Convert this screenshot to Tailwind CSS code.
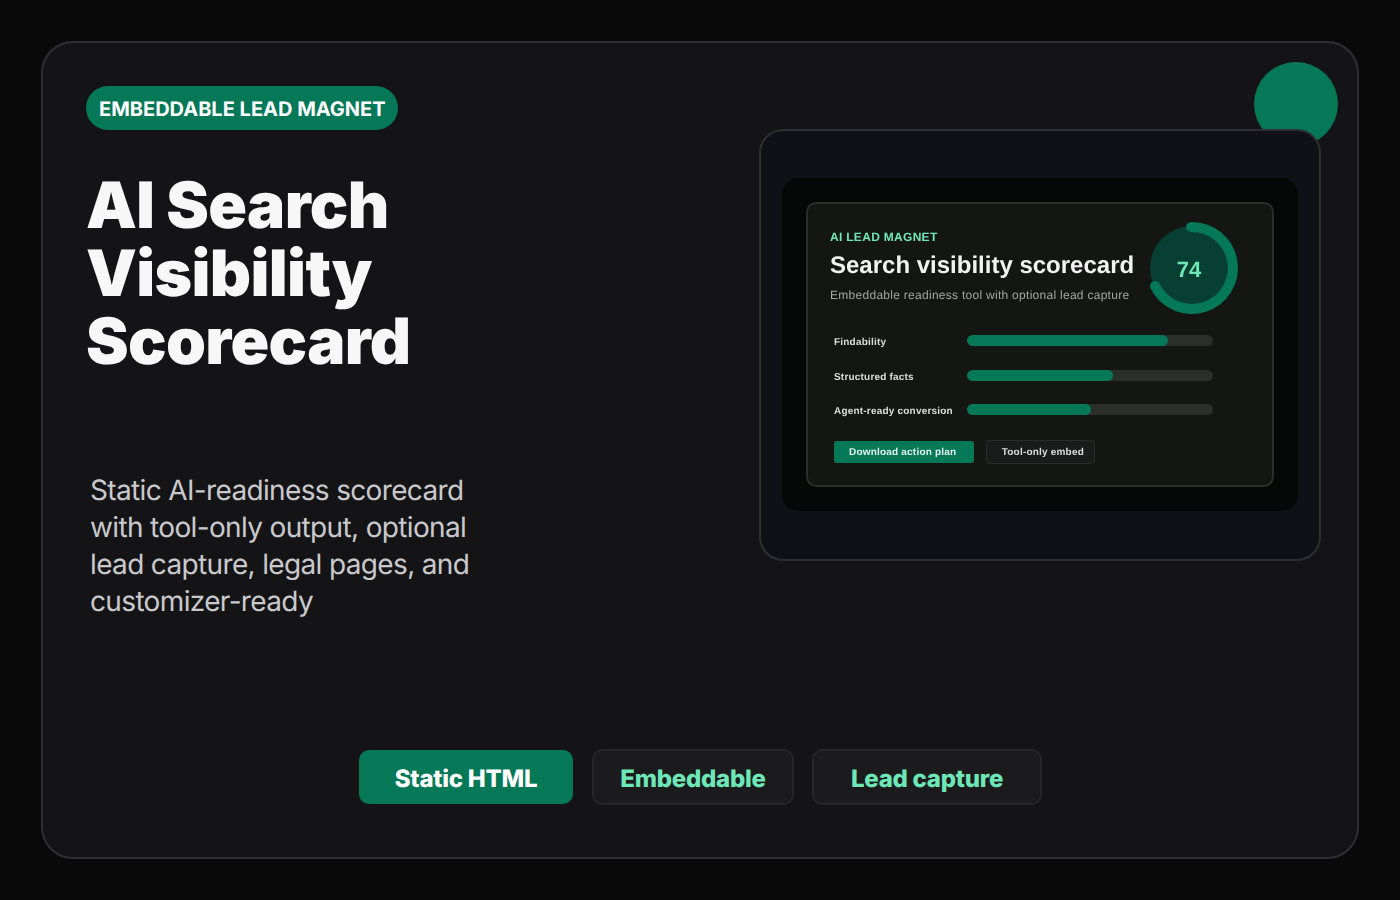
<!DOCTYPE html>
<html lang="en">
<head>
    <meta charset="UTF-8">
    <title>AI Search Visibility Scorecard</title>
    <script src="https://cdn.jsdelivr.net/npm/@tailwindcss/browser@4"></script>
</head>
<body class="bg-[#0a0a0b] font-[Inter,sans-serif] [text-rendering:geometricPrecision]">
    <div class="w-[1400px] h-[900px] p-[41px]">
        <div class="relative h-full flex flex-col bg-[#141416] border-2 border-[#2e2e35] rounded-[32px] pt-[43px] pb-[52px] pl-[43px] pr-[36px]">
            <!-- decoration behind the preview -->
            <div class="absolute top-[19px] right-[19px] w-[84px] h-[84px] rounded-full bg-[#047857]"></div>

            <div class="flex-1 flex justify-between">
                <div>
                    <span class="inline-flex items-center w-[312px] h-[44px] pl-[13px] pt-[2px] rounded-full bg-[#047857] text-white text-[20px] font-bold whitespace-nowrap">EMBEDDABLE LEAD MAGNET</span>
                    <h1 class="mt-[42px] text-[64px] leading-[68px] font-black text-[#f7f7f7] tracking-[-0.01em] [font-optical-sizing:none]">AI Search<br>Visibility<br>Scorecard</h1>
                    <p class="mt-[96px] ml-[4px] w-[420px] text-[28px] leading-[37px] text-[#c9c9cd] tracking-[-0.65px]">Static AI-readiness scorecard with tool-only output, optional lead capture, legal pages, and customizer-ready</p>
                </div>

                <!-- preview window -->
                <div class="relative mt-[43px] w-[562px] h-[432px] bg-[#0f1117] border-2 border-[#2e2e35] rounded-[24px] px-[21px] pt-[47px] font-['Liberation_Sans',sans-serif]">
                    <div class="h-[333px] bg-[#060807] rounded-[16px] px-[24px] pt-[24px]">
                        <div class="h-[285px] bg-[#141614] border-2 border-[#2a2d2a] rounded-[10px] pl-[22px] pr-[34px] pt-[18px] blur-[0.3px]">
                            <div class="flex justify-between h-[113px]">
                                <div class="pt-[8px]">
                                    <div class="text-[12px] leading-[14px] font-bold text-[#6ee7b7] tracking-[0.3px]">AI LEAD MAGNET</div>
                                    <div class="mt-[7px] text-[24px] leading-[30px] font-bold text-[#f2f2f2] whitespace-nowrap">Search visibility scorecard</div>
                                    <div class="mt-[7px] text-[12px] leading-[14px] text-[#a3a5a3] tracking-[0.28px] whitespace-nowrap">Embeddable readiness tool with optional lead capture</div>
                                </div>
                                <svg class="w-[100px] h-[100px] -mr-[4px] -mt-[4px] shrink-0" viewBox="0 0 100 100">
                                    <circle cx="50" cy="50" r="42" fill="#083f33"/>
                                    <path d="M49 9 A41 41 0 1 1 13 68" fill="none" stroke="#047857" stroke-width="10" stroke-linecap="round"/>
                                    <text x="47" y="59" text-anchor="middle" font-size="22" font-weight="700" fill="#6ee7b7">74</text>
                                </svg>
                            </div>
                            <div class="pl-[4px] text-[10px] font-bold text-[#dcdcdc] tracking-[0.2px]">
                                <div class="flex h-[34.5px]">
                                    <div class="w-[133px] pt-[1px] leading-[14px]">Findability</div>
                                    <div class="w-[246px] h-[11px] rounded-full bg-[#2a2f2c] overflow-hidden"><div class="h-full rounded-full bg-[#047857]" style="width: 201px"></div></div>
                                </div>
                                <div class="flex h-[34.5px]">
                                    <div class="w-[133px] pt-[1px] leading-[14px]">Structured facts</div>
                                    <div class="w-[246px] h-[11px] rounded-full bg-[#2a2f2c] overflow-hidden"><div class="h-full rounded-full bg-[#047857]" style="width: 146px"></div></div>
                                </div>
                                <div class="flex h-[34.5px]">
                                    <div class="w-[133px] pt-[1px] leading-[14px] whitespace-nowrap">Agent-ready conversion</div>
                                    <div class="w-[246px] h-[11px] rounded-full bg-[#2a2f2c] overflow-hidden"><div class="h-full rounded-full bg-[#047857]" style="width: 124px"></div></div>
                                </div>
                                <div class="flex items-center gap-[12px] mt-[1px]">
                                    <div class="w-[140px] h-[22px] flex items-center justify-start pl-[15px] pt-[1px] rounded-[3px] bg-[#047857] text-[#e3f2ec]">Download action plan</div>
                                    <div class="w-[109px] h-[24px] flex items-center justify-end pr-[10px] pt-[1px] rounded-[3px] bg-[#191c1a] border border-[#2a2d2a] text-[#dcdcdc]">Tool-only embed</div>
                                </div>
                            </div>
                        </div>
                    </div>
                </div>
            </div>

            <div class="flex items-center justify-center gap-[18px] -ml-[6px] text-[24px] font-extrabold tracking-[-0.01em]">
                <div class="w-[214px] h-[54px] mr-[1px] pt-[3px] flex items-center justify-center rounded-[10px] bg-[#047857] text-white">Static HTML</div>
                <div class="w-[202px] h-[56px] pt-[3px] flex items-center justify-center rounded-[10px] bg-[#1b1b1e] border-2 border-[#26262a] text-[#6ee7b7]">Embeddable</div>
                <div class="w-[230px] h-[56px] pt-[3px] flex items-center justify-center rounded-[10px] bg-[#1b1b1e] border-2 border-[#26262a] text-[#6ee7b7]">Lead capture</div>
            </div>
        </div>
    </div>
</body>
</html>
